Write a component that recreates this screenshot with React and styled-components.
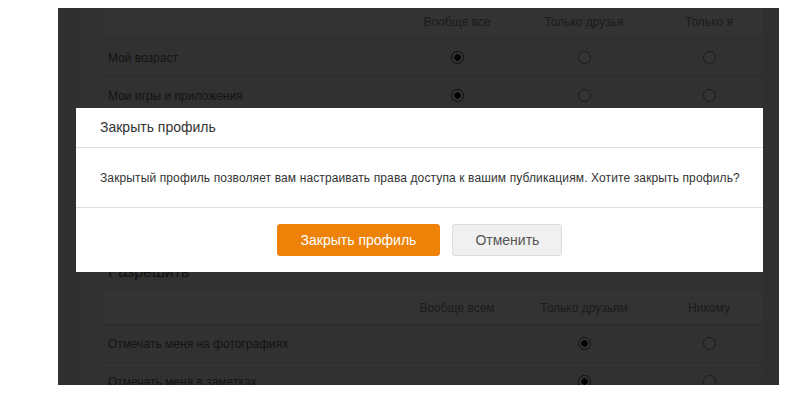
import React from 'react';
import styled, { createGlobalStyle } from 'styled-components';

const GlobalStyle = createGlobalStyle`
  body {
    margin: 0;
    background: #fff;
    font-family: "Liberation Sans", Arial, sans-serif;
  }
`;

// рамка страницы настроек (затемнена оверлеем)
const Frame = styled.div`
  position: relative;
  margin: 8px 0 0 58px;
  width: 721px;
  height: 377px;
  overflow: hidden;
  background: #ebebeb;
`;

const Panel = styled.div`
  margin-left: 22px;
  width: 660px;
  height: 100%;
  padding-left: 23px;
  background: #f5f5f5;
  margin-top: -3px;
`;

const Row = styled.div`
  display: grid;
  grid-template-columns: 1fr 112px 142px 108px;
  align-items: center;
  height: ${(p) => (p.$head ? 34 : 38)}px;
  border-bottom: 1px solid #dcdcdc;
  box-sizing: border-box;
  background: ${(p) => (p.$head ? '#fff' : 'transparent')};
  font-size: 12px;
`;

const Label = styled.div`
  padding-left: 5px;
  color: #666;
  white-space: nowrap;
`;

const ColTitle = styled.div`
  text-align: center;
  color: #888;
  white-space: nowrap;
`;

const Cell = styled.div`
  display: flex;
  justify-content: center;
`;

const Radio = styled.span`
  width: 11px;
  height: 11px;
  border-radius: 50%;
  border: 1px solid ${(p) => (p.$checked ? '#444' : '#808080')};
  background: ${(p) =>
    p.$checked ? 'radial-gradient(circle, #111 3px, #fff 3.6px)' : '#fff'};
`;

const SectionTitle = styled.div`
  margin-top: 33px;
  margin-bottom: 9px;
  padding-left: 5px;
  font-size: 16px;
  line-height: 20px;
  color: #555;
`;

const Overlay = styled.div`
  position: absolute;
  inset: 0;
  background: rgba(0, 0, 0, 0.8);
`;

const Modal = styled.div`
  position: absolute;
  left: 18px;
  top: 100px;
  width: 687px;
  background: #fff;
  color: #333;
`;

const ModalHead = styled.div`
  height: 39px;
  line-height: 39px;
  padding-left: 24px;
  font-size: 14px;
  border-bottom: 1px solid #e0e0e0;
`;

const ModalBody = styled.div`
  height: 60px;
  display: flex;
  align-items: center;
  padding-left: 24px;
  box-sizing: border-box;
  font-size: 12px;
  letter-spacing: 0.12px;
  border-bottom: 1px solid #e0e0e0;
`;

const ModalFoot = styled.div`
  height: 64px;
  display: flex;
  justify-content: center;
  align-items: center;
  gap: 12px;
`;

const Btn = styled.button`
  height: 32px;
  padding: 0 ${(p) => (p.$primary ? 23 : 22)}px;
  border-radius: 3px;
  font-family: inherit;
  font-size: 14px;
  border: 1px solid ${(p) => (p.$primary ? '#ee8208' : '#dcdcdc')};
  background: ${(p) => (p.$primary ? '#ee8208' : '#f0f0f0')};
  color: ${(p) => (p.$primary ? '#fff' : '#555')};
`;

const topRows = [
  ['Мой возраст', 0],
  ['Мои игры и приложения', 0],
  ['Мои группы', 0],
  ['Мои подарки', 0],
  ['Мои праздники', 0],
];

const bottomRows = [
  ['Отмечать меня на фотографиях', 1],
  ['Отмечать меня в заметках', 1],
];

function RadioRow({ label, value, cols }) {
  return (
    <Row>
      <Label>{label}</Label>
      {cols.map((c, i) => (
        <Cell key={i}>{c ? <Radio $checked={value === i} /> : null}</Cell>
      ))}
    </Row>
  );
}

export default function App() {
  return (
    <>
      <GlobalStyle />
      <Frame>
        <Panel>
          <Row $head>
            <span />
            <ColTitle>Вообще все</ColTitle>
            <ColTitle>Только друзья</ColTitle>
            <ColTitle>Только я</ColTitle>
          </Row>
          {topRows.map(([l, v]) => (
            <RadioRow key={l} label={l} value={v} cols={[1, 1, 1]} />
          ))}

          <SectionTitle>Разрешить</SectionTitle>
          <Row $head>
            <span />
            <ColTitle>Вообще всем</ColTitle>
            <ColTitle>Только друзьям</ColTitle>
            <ColTitle>Никому</ColTitle>
          </Row>
          {bottomRows.map(([l, v]) => (
            <RadioRow key={l} label={l} value={v} cols={[0, 1, 1]} />
          ))}
        </Panel>

        <Overlay />

        <Modal>
          <ModalHead>Закрыть профиль</ModalHead>
          <ModalBody>
            Закрытый профиль позволяет вам настраивать права доступа к вашим публикациям. Хотите закрыть профиль?
          </ModalBody>
          <ModalFoot>
            <Btn $primary>Закрыть профиль</Btn>
            <Btn>Отменить</Btn>
          </ModalFoot>
        </Modal>
      </Frame>
    </>
  );
}
